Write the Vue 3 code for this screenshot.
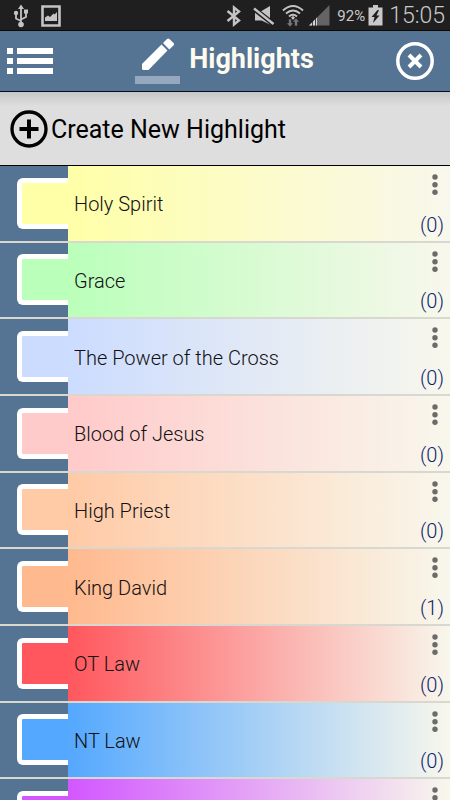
<script setup>
const highlights = [
  { name: 'Holy Spirit', count: '(0)', color: '#ffffa8' },
  { name: 'Grace', count: '(0)', color: '#baffba' },
  { name: 'The Power of the Cross', count: '(0)', color: '#ccdcff' },
  { name: 'Blood of Jesus', count: '(0)', color: '#ffcaca' },
  { name: 'High Priest', count: '(0)', color: '#ffcaa6' },
  { name: 'King David', count: '(1)', color: '#ffb98e' },
  { name: 'OT Law', count: '(0)', color: '#ff575d' },
  { name: 'NT Law', count: '(0)', color: '#54a8ff' },
  { name: '', count: '', color: '#d257ff' },
]
</script>

<template>
  <div class="screen">
    <div class="status">
      <svg class="usb" width="16" height="24" viewBox="0 0 16 24" fill="none" stroke="#c4c4c4" stroke-width="1.8">
        <path d="M8 3V20M8 17L3 14.500V10M8 15.500L13 13V8" />
        <path d="M8 .5L11 5H5Z" fill="#c4c4c4" stroke="none" />
        <circle cx="8" cy="20.500" r="2.800" fill="#c4c4c4" stroke="none" />
        <circle cx="3" cy="9" r="2.200" fill="#c4c4c4" stroke="none" />
        <path d="M11 5.500h4v4h-4z" fill="#c4c4c4" stroke="none" />
      </svg>
      <svg width="20" height="22" viewBox="0 0 20 22">
        <path d="M1.500 1.500h17v19h-17z" fill="none" stroke="#c4c4c4" stroke-width="2.600" />
        <path d="M4 16V12.500L7 10.500L9 12L12.500 8.500L13.500 9.500L16 7V16Z" fill="#c4c4c4" />
      </svg>
      <span class="spacer"></span>
      <svg class="bt" width="16" height="22" viewBox="0 0 16 22" fill="none" stroke="#c4c4c4" stroke-width="2.400">
        <path d="M1.500 6L13 15.500L8 19.500V2.500L13 6.500L1.500 16" />
      </svg>
      <svg class="mute" width="22" height="22" viewBox="0 0 22 22">
        <path d="M2 6H8.500L17 1V19.500L8.500 15.500H2Z" fill="#c4c4c4" />
        <path d="M0 3L21 19.500" stroke="#1f1f1f" stroke-width="5" />
        <path d="M1 3.500L20.500 19" stroke="#c4c4c4" stroke-width="2.400" />
      </svg>
      <svg class="wifi" width="22" height="24" viewBox="0 0 22 24" fill="none" stroke="#c4c4c4" stroke-width="2">
        <path d="M1 6.500Q11 -2.500 21 6.500M4 9.500Q11 3.500 18 9.500M7 12.500Q11 9 15 12.500" />
        <path d="M9 13.500L11 12L13 13.500L11 16Z" fill="#c4c4c4" stroke="none" />
        <path d="M6.500 15h3v4h2L8 23L4.500 19h2zM12.500 22h3v-4h2L14 14L10.500 18h2z" fill="#777" stroke="#1f1f1f" stroke-width=".6" />
      </svg>
      <svg class="signal" width="21" height="21" viewBox="0 0 21 21">
        <path d="M0 20.500L20.500 0V20.500Z" fill="#646464" />
        <path d="M0 20.500L8 12.500V20.500Z" fill="#d4d4d4" />
        <path d="M3.500 15v6M6.500 13v8" stroke="#1f1f1f" stroke-width=".8" />
      </svg>
      <span class="percent">92%</span>
      <svg class="battery" width="15" height="21" viewBox="0 0 15 21">
        <path d="M5 0h5v2.500h4.500V20.500H.5V2.500H5z" fill="#c9c9c9" />
        <path d="M9.500 5L3.500 12H6.500L5 18L11.500 10.500H8.500L11 5Z" fill="#1f1f1f" />
      </svg>
      <span class="clock">15:05</span>
    </div>

    <header class="header">
      <button class="icon-button" aria-label="Menu">
        <svg width="46" height="26" viewBox="0 0 46 26" fill="#fff">
          <path d="M0 0h6v6H0zM10 0h36v6H10zM0 10h6v6H0zM10 10h36v6H10zM0 20h6v6H0zM10 20h36v6H10z" />
        </svg>
      </button>
      <div class="brand">
        <svg width="46" height="46" viewBox="0 0 46 46">
          <path d="M7 26L26.500 6.500L32.500 12.500L13.500 32H8.500Q7 32 7 30.500Z" fill="#fff" />
          <path d="M28 5L32 1Q33.200 -.2 34.400 1L38.500 5.100Q39.700 6.300 38.500 7.500L34.300 11.500Z" fill="#fff" />
          <path d="M0 38h45v8H0z" fill="#96a8bd" />
        </svg>
        <h1>Highlights</h1>
      </div>
      <button class="icon-button" aria-label="Close">
        <svg width="38" height="38" viewBox="0 0 38 38" fill="none" stroke="#fff">
          <circle cx="19" cy="19" r="17.200" stroke-width="3.500" />
          <path d="M13 13L25 25M25 13L13 25" stroke-width="4" />
        </svg>
      </button>
    </header>

    <button class="create">
      <svg width="38" height="38" viewBox="0 0 38 38" fill="none" stroke="#000">
        <circle cx="19" cy="19" r="17" stroke-width="3.300" />
        <path d="M9.500 19H28.500M19 9.500V28.500" stroke-width="4" />
      </svg>
      <span>Create New Highlight</span>
    </button>

    <ul class="list">
      <li v-for="(item, index) in highlights" :key="index" class="row" :style="{ '--tint': item.color }">
        <div class="tab"><span class="swatch"></span></div>
        <div class="body">
          <span class="name">{{ item.name }}</span>
          <div class="side">
            <button class="more" aria-label="Options">
              <svg width="6" height="22" viewBox="0 0 6 22" fill="#6b6b6b">
                <circle cx="3" cy="3" r="2.700" />
                <circle cx="3" cy="10.700" r="2.700" />
                <circle cx="3" cy="18.300" r="2.700" />
              </svg>
            </button>
            <span class="count">{{ item.count }}</span>
          </div>
        </div>
      </li>
    </ul>
  </div>
</template>

<style>
body {
  margin: 0;
}
</style>

<style scoped>
.screen {
  height: 100vh;
  overflow: hidden;
  display: flex;
  flex-direction: column;
  background: #557393;
  font-family: Roboto, "Liberation Sans", sans-serif;
  font-weight: 300;
}
svg {
  display: block;
  flex: none;
}
button {
  border: 0;
  padding: 0;
  background: none;
  font: inherit;
  color: inherit;
  cursor: pointer;
}
.status {
  flex: none;
  box-sizing: border-box;
  height: 31px;
  display: flex;
  align-items: center;
  padding: 1px 5px 0 13px;
  background: #1f1f1f;
  border-bottom: 1px solid #0c0806;
  color: #c9c9c9;
}
.usb {
  margin-right: 12px;
}
.spacer {
  flex: 1;
}
.bt {
  margin-right: 11px;
}
.mute {
  margin-right: 7px;
}
.wifi {
  margin-right: 5px;
}
.signal {
  margin-right: 7px;
}
.percent {
  font-size: 15px;
  font-weight: 400;
  margin-right: 3px;
}
.battery {
  margin-right: 6px;
}
.clock {
  font-size: 23px;
  line-height: 30px;
}
.header {
  flex: none;
  box-sizing: border-box;
  height: 61px;
  display: flex;
  align-items: center;
  justify-content: space-between;
  padding: 0 16px 0 7px;
  background: #557393;
  border-bottom: 1px solid #060d18;
}
.brand {
  display: flex;
  align-items: center;
  gap: 8px;
}
h1 {
  margin: 0;
  padding-bottom: 4px;
  font-size: 27px;
  line-height: 32px;
  font-weight: 700;
  color: #fffbee;
}
.create {
  flex: none;
  box-sizing: border-box;
  height: 74px;
  display: flex;
  align-items: center;
  gap: 3px;
  padding: 0 10px;
  border-bottom: 1px solid #000;
  background: linear-gradient(#c6c6c6, #dedede 14px);
  color: #000;
  font-size: 25px;
  font-weight: 400;
  text-align: left;
}
.create span {
  padding-top: 2px;
}
.list {
  flex: none;
  height: 690px;
  margin: 0;
  padding: 0;
  list-style: none;
  display: grid;
  grid-template-rows: repeat(9, 1fr);
}
.row {
  display: flex;
  border-bottom: 2px solid #d9d8d0;
}
.tab {
  flex: none;
  width: 68px;
  display: flex;
  align-items: center;
  justify-content: flex-end;
}
.swatch {
  box-sizing: border-box;
  width: 51px;
  height: 51px;
  border: 5px solid #fff;
  border-right: 0;
  border-radius: 6px 0 0 6px;
  background: var(--tint);
}
.body {
  flex: 1;
  display: flex;
  align-items: center;
  justify-content: space-between;
  padding: 0 6px;
  background: linear-gradient(to right, var(--tint), #f8f7ec);
}
.name {
  padding-top: 2px;
  font-size: 20px;
  line-height: 26px;
  color: #111;
}
.side {
  align-self: stretch;
  display: flex;
  flex-direction: column;
  justify-content: space-between;
  align-items: flex-end;
  padding: 8px 0 4px;
}
.more {
  padding: 0 6px;
}
.count {
  font-size: 20px;
  line-height: 24px;
  color: #0b1f70;
}
</style>
